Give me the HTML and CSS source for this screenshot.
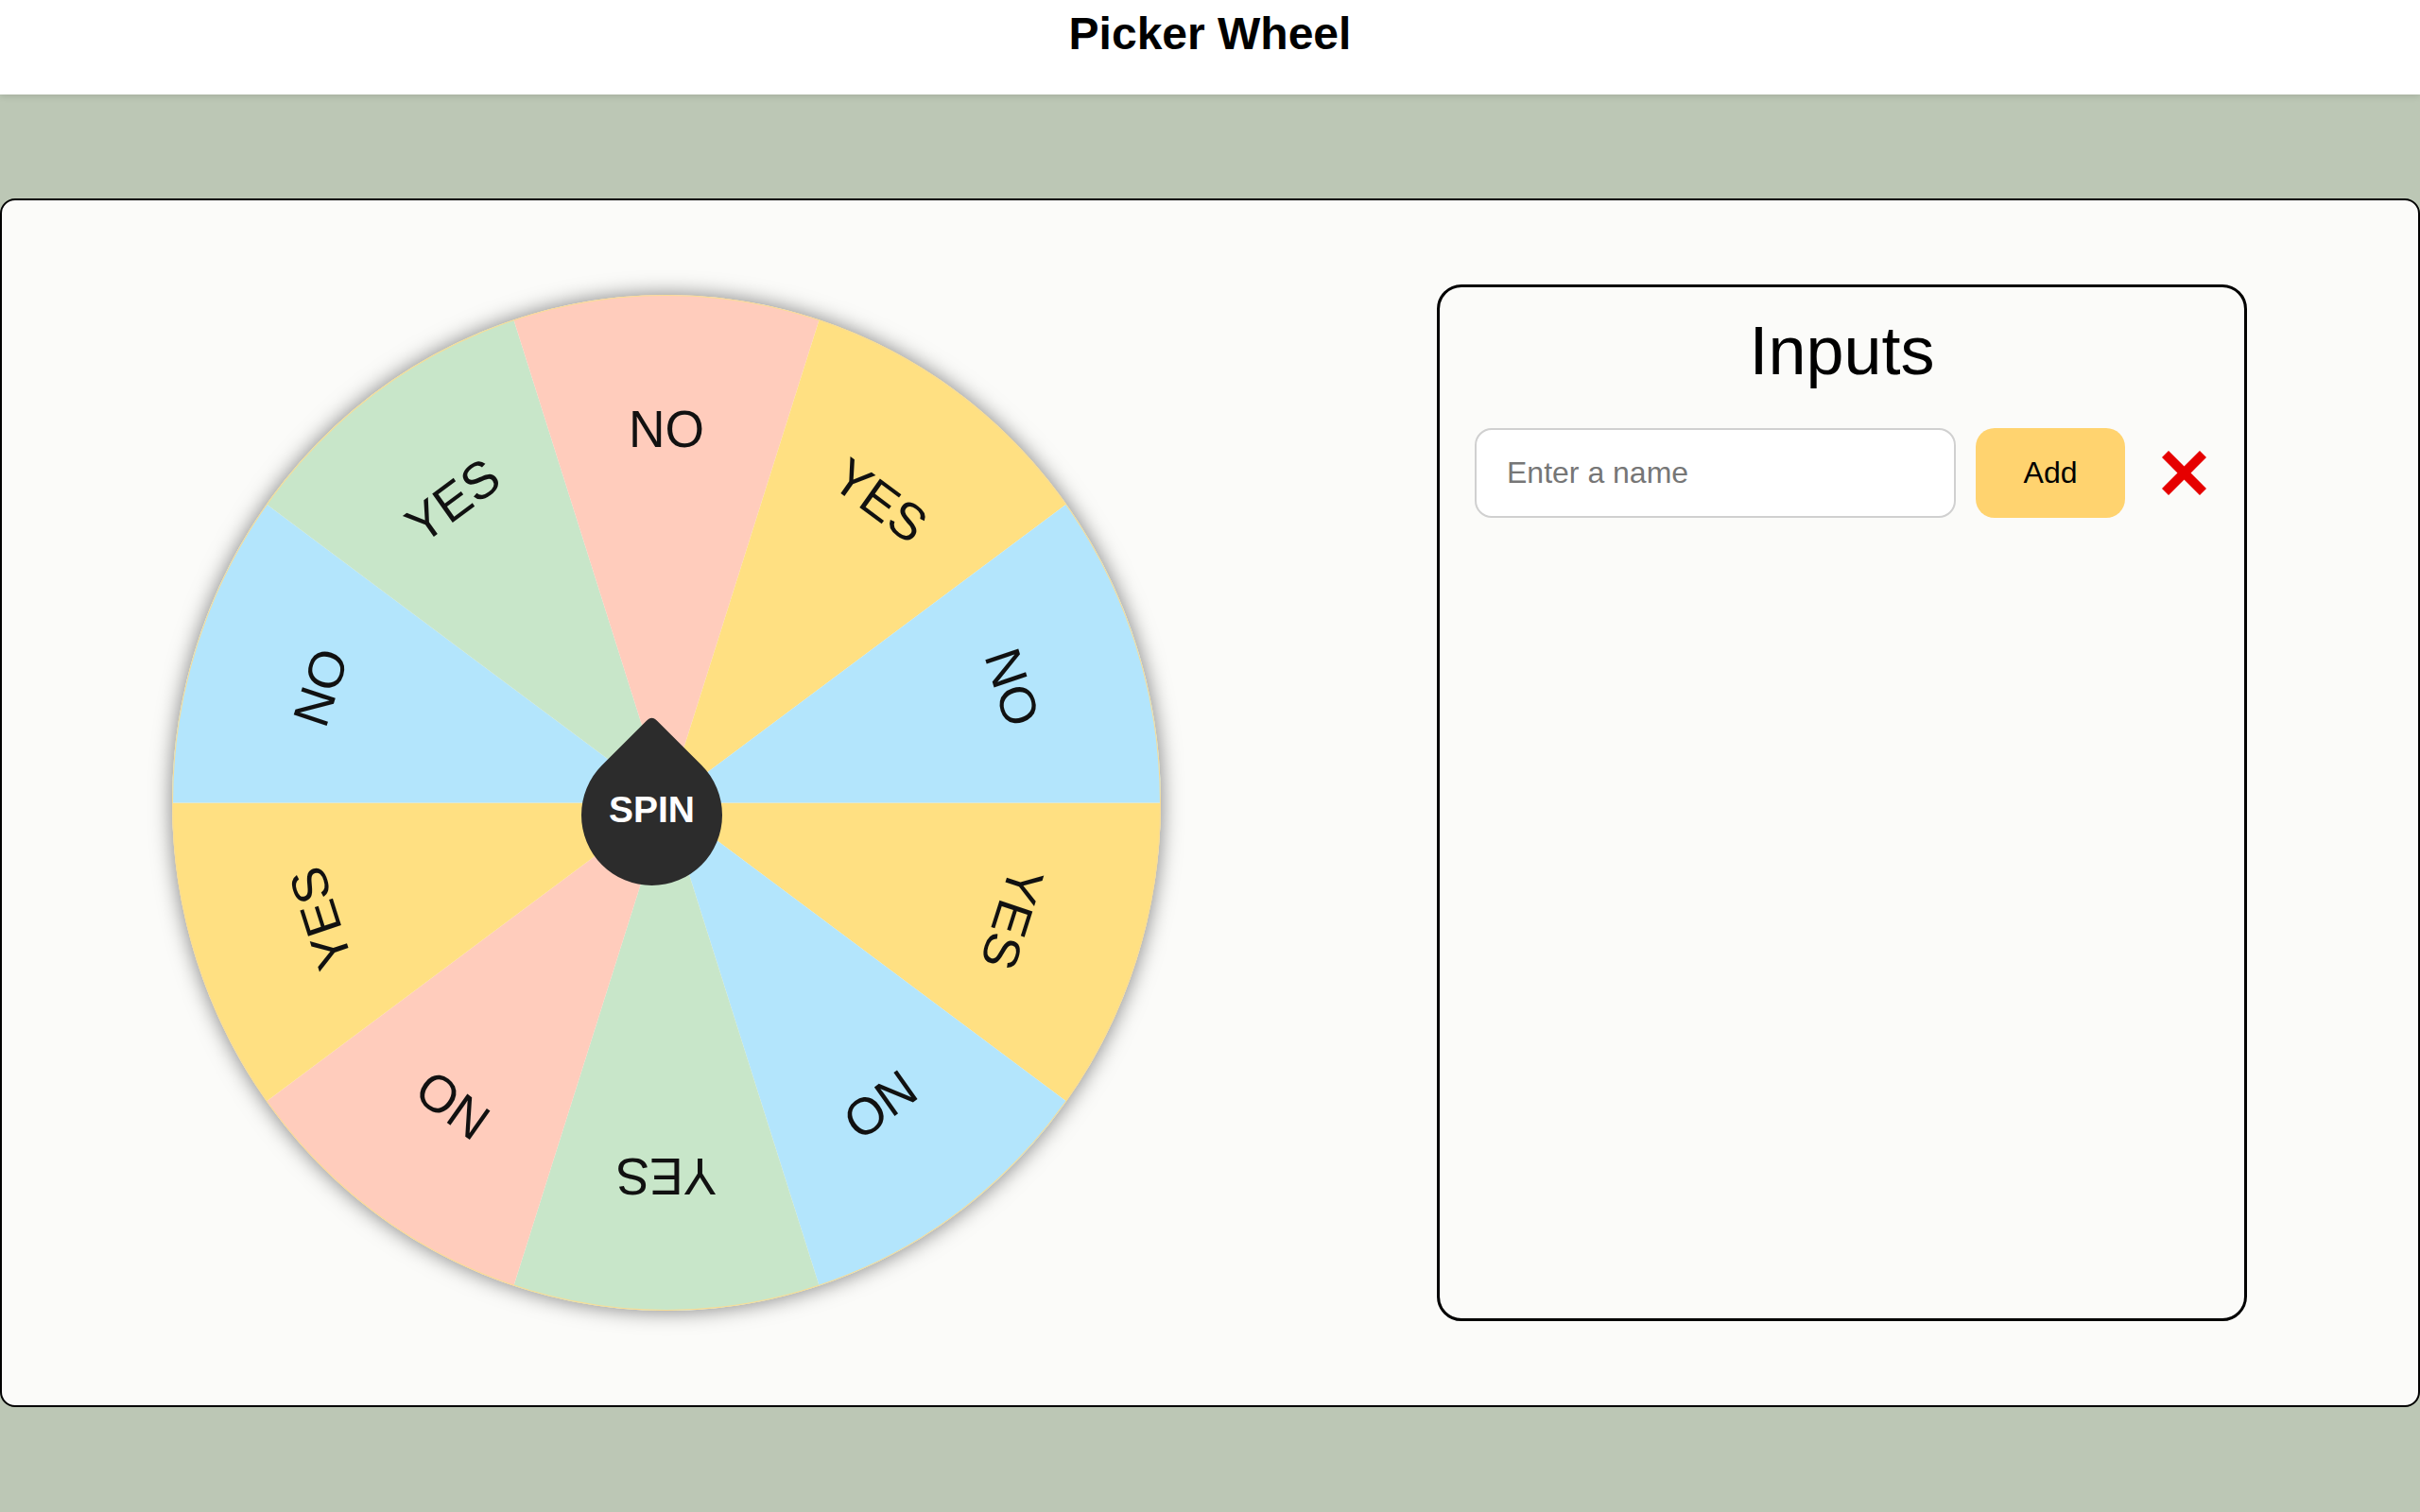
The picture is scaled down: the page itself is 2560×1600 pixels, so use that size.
FILE: index.html
```html
<!DOCTYPE html>
<html lang="en">
<head>
<meta charset="utf-8">
<title>Picker Wheel</title>
<link rel="stylesheet" href="styles.css">
</head>
<body>
<header class="topbar">
  <h1 class="title">Picker Wheel</h1>
</header>
<main class="card">
  <div class="wheel">
    <svg class="wheel-svg" viewBox="-500 -500 1000 1000" preserveAspectRatio="none">
      <path class="seg yellow" d="M0 0 L500 0 A500 500 0 0 1 404.51 293.89 Z"/>
      <path class="seg blue" d="M0 0 L404.51 293.89 A500 500 0 0 1 154.51 475.53 Z"/>
      <path class="seg green" d="M0 0 L154.51 475.53 A500 500 0 0 1 -154.51 475.53 Z"/>
      <path class="seg pink" d="M0 0 L-154.51 475.53 A500 500 0 0 1 -404.51 293.89 Z"/>
      <path class="seg yellow" d="M0 0 L-404.51 293.89 A500 500 0 0 1 -500 0 Z"/>
      <path class="seg blue" d="M0 0 L-500 0 A500 500 0 0 1 -404.51 -293.89 Z"/>
      <path class="seg green" d="M0 0 L-404.51 -293.89 A500 500 0 0 1 -154.51 -475.53 Z"/>
      <path class="seg pink" d="M0 0 L-154.51 -475.53 A500 500 0 0 1 154.51 -475.53 Z"/>
      <path class="seg yellow" d="M0 0 L154.51 -475.53 A500 500 0 0 1 404.51 -293.89 Z"/>
      <path class="seg blue" d="M0 0 L404.51 -293.89 A500 500 0 0 1 500 0 Z"/>
      <circle class="rim" cx="0" cy="0" r="499.5"/>
      <g class="labels">
        <text transform="rotate(108) translate(0 -368)">YES</text>
        <text transform="rotate(144) translate(0 -368)">NO</text>
        <text transform="rotate(180) translate(0 -368)">YES</text>
        <text transform="rotate(216) translate(0 -368)">NO</text>
        <text transform="rotate(252) translate(0 -368)">YES</text>
        <text transform="rotate(288) translate(0 -368)">NO</text>
        <text transform="rotate(324) translate(0 -368)">YES</text>
        <text transform="rotate(0) translate(0 -368)">NO</text>
        <text transform="rotate(36) translate(0 -368)">YES</text>
        <text transform="rotate(72) translate(0 -368)">NO</text>
      </g>
    </svg>
    <button class="spin" type="button"><span class="spin-label">SPIN</span></button>
  </div>
  <section class="inputs">
    <h2 class="inputs-title">Inputs</h2>
    <div class="entry-row">
      <input class="name-input" type="text" placeholder="Enter a name">
      <button class="add-btn" type="button">Add</button>
      <svg class="clear-icon" viewBox="0 0 47 47" aria-label="Clear">
        <line x1="3.5" y1="3.5" x2="43.5" y2="43.5"/>
        <line x1="43.5" y1="3.5" x2="3.5" y2="43.5"/>
      </svg>
    </div>
  </section>
</main>
</body>
</html>
```

FILE: styles.css
```css
html, body {
  margin: 0;
  padding: 0;
}

body {
  background: #bcc7b5;
  font-family: "Liberation Sans", Arial, Helvetica, sans-serif;
  height: 1600px;
  overflow: hidden;
}

.topbar {
  height: 100px;
  background: #ffffff;
  box-shadow: 0 2px 7px rgba(0, 0, 0, 0.12);
  position: relative;
  z-index: 1;
  box-sizing: border-box;
  padding-top: 9px;
}

.title {
  margin: 0;
  text-align: center;
  font-size: 48px;
  line-height: 54px;
  font-weight: bold;
  color: #000;
}

.card {
  margin-top: 110px;
  height: 1279px;
  box-sizing: border-box;
  border: 2px solid #000;
  border-radius: 16px;
  background: #fbfbf9;
  display: flex;
  align-items: center;
  padding-left: 180px;
}

.wheel {
  position: relative;
  width: 1046px;
  height: 1075px;
  border-radius: 50%;
  box-shadow: 0 0 22px rgba(0, 0, 0, 0.5);
  flex: none;
}

.wheel-svg {
  display: block;
  width: 100%;
  height: 100%;
}

.seg.yellow { fill: #ffe082; }
.seg.blue { fill: #b3e5fc; }
.seg.green { fill: #c8e6c9; }
.seg.pink { fill: #ffccbc; }

.rim {
  fill: none;
  stroke: #f8dc95;
  stroke-width: 1;
}

.labels text {
  font-family: "Liberation Sans", Arial, Helvetica, sans-serif;
  font-size: 51px;
  fill: #111;
  text-anchor: middle;
  dominant-baseline: central;
}

.spin {
  position: absolute;
  left: 433px;
  top: 476px;
  width: 149px;
  height: 149px;
  padding: 0;
  margin: 0;
  border: none;
  background: transparent;
  cursor: pointer;
  display: flex;
  align-items: center;
  justify-content: center;
}

.spin::before {
  content: "";
  position: absolute;
  inset: 0;
  background: #2c2c2c;
  border-radius: 50% 6px 50% 50%;
  transform: rotate(-45deg);
}

.spin-label {
  position: relative;
  color: #fff;
  font-family: "Liberation Sans", Arial, Helvetica, sans-serif;
  font-weight: bold;
  font-size: 39px;
  line-height: 1;
  margin-top: -12px;
}

.inputs {
  flex: none;
  margin-left: 292px;
  width: 857px;
  height: 1097px;
  box-sizing: border-box;
  border: 3px solid #000;
  border-radius: 26px;
  background: #fbfbf9;
  padding: 26px 0 0 37px;
}

.inputs-title {
  margin: 0 0 41px -37px;
  text-align: center;
  font-size: 72px;
  line-height: 82px;
  font-weight: normal;
  color: #000;
}

.entry-row {
  display: flex;
  align-items: center;
}

.name-input {
  width: 509px;
  height: 95px;
  box-sizing: border-box;
  border: 2px solid #d0d0d0;
  border-radius: 18px;
  background: #fff;
  padding: 0 0 0 32px;
  font-family: "Liberation Sans", Arial, Helvetica, sans-serif;
  font-size: 32px;
  color: #000;
  outline: none;
  margin: 0;
}

.name-input::placeholder {
  color: #767676;
}

.add-btn {
  margin: 0 0 0 21px;
  width: 158px;
  height: 95px;
  border: none;
  border-radius: 20px;
  background: #ffd36f;
  font-family: "Liberation Sans", Arial, Helvetica, sans-serif;
  font-size: 32px;
  color: #000;
  padding: 0;
}

.clear-icon {
  margin-left: 39px;
  width: 47px;
  height: 47px;
  flex: none;
}

.clear-icon line {
  stroke: #e60000;
  stroke-width: 10;
  stroke-linecap: butt;
}
```
